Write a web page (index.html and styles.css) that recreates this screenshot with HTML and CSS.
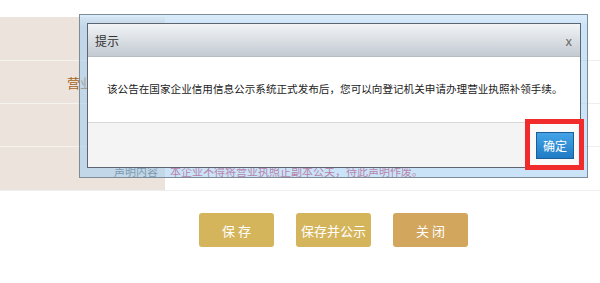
FILE: index.html
```html
<!DOCTYPE html>
<html lang="zh-CN">
<head>
  <meta charset="UTF-8">
  <meta name="viewport" content="width=device-width, initial-scale=1.0">
  <link rel="stylesheet" href="styles.css">
</head>
<body>
  <div class="page">
    <div class="form-table">
      <div class="form-row">
        <div class="form-label"></div>
        <div class="form-value"></div>
      </div>
      <div class="form-row">
        <div class="form-label label-key">营业</div>
        <div class="form-value"></div>
      </div>
      <div class="form-row">
        <div class="form-label"></div>
        <div class="form-value"></div>
      </div>
      <div class="form-row">
        <div class="form-label label-small">声明内容</div>
        <div class="form-value notice-text">本企业不得将营业执照正副本公关，待此声明作废。</div>
      </div>
    </div>

    <div class="actions">
      <button class="gold-button">保 存</button>
      <button class="gold-button">保存并公示</button>
      <button class="gold-button close-button">关 闭</button>
    </div>
  </div>

  <div class="dialog-frame">
    <div class="dialog">
      <div class="dialog-title">
        <span>提示</span>
        <span class="dialog-close">x</span>
      </div>
      <div class="dialog-body">
        该公告在国家企业信用信息公示系统正式发布后，您可以向登记机关申请办理营业执照补领手续。
      </div>
      <div class="dialog-footer">
        <button class="ok-button">确定</button>
      </div>
    </div>
  </div>

  <div class="highlight-box"></div>
</body>
</html>
```

FILE: styles.css
```css
body {
  font-family: "Noto Sans CJK SC", "Noto Sans", sans-serif;
  background-color: #fff;
  margin: 0;
  padding: 0;
  width: 600px;
  height: 283px;
  overflow: hidden;
}
.page {
  padding-top: 17px;
}
.form-table {
  border-bottom: 1px solid #eeeeee;
}
.form-row {
  display: flex;
  height: 43px;
}
.form-row:first-child {
  height: 44px;
}
.form-label {
  width: 165px;
  flex-shrink: 0;
  box-sizing: border-box;
  background-color: #ebe3dc;
  border-bottom: 1px solid #f6f2ee;
  display: flex;
  align-items: center;
  justify-content: flex-end;
  padding-right: 7px;
  font-size: 12px;
  color: #555;
}
.form-row:last-child .form-label {
  border-bottom: none;
}
/* label continues under the dialog; only its start shows */
.label-key {
  font-size: 13px;
  color: #a6651f;
  justify-content: flex-start;
  padding-left: 67px;
}
.label-small {
  font-size: 11px;
  color: #4f5a5a;
  padding-top: 4px;
}
.form-value {
  flex: 1;
  border-bottom: 1px solid #eeeeee;
  display: flex;
  align-items: center;
  padding-left: 5px;
}
.form-row:last-child .form-value {
  border-bottom: none;
}
.notice-text {
  color: #d42850;
  font-size: 11px;
  padding-top: 4px;
}
.actions {
  display: flex;
  gap: 22px;
  margin-top: 22px;
  margin-left: 199px;
}
.gold-button {
  width: 75px;
  height: 34px;
  border: none;
  border-radius: 3px;
  background-color: #d5b55c;
  color: #fff;
  font-family: inherit;
  font-size: 13px;
  padding: 0;
}
.close-button {
  background-color: #d2a65c;
}
.dialog-frame {
  position: absolute;
  left: 79px;
  top: 14px;
  width: 509px;
  height: 164px;
  box-sizing: border-box;
  border: 1px solid #7d8c99;
  background: linear-gradient(rgba(212, 232, 249, 0.85), rgba(160, 205, 242, 0.55) 12px);
  padding: 8px 6px 9px 7px;
}
.dialog {
  height: 100%;
  box-sizing: border-box;
  border: 1px solid #5d6670;
  background-color: #fff;
  display: flex;
  flex-direction: column;
}
.dialog-title {
  height: 32px;
  flex-shrink: 0;
  background: linear-gradient(#f2f4f6, #c3cad2);
  border-bottom: 1px solid #b4bcc4;
  display: flex;
  align-items: center;
  justify-content: space-between;
  padding: 0 8px 0 7px;
  font-size: 12px;
  color: #333;
}
.dialog-close {
  font-size: 13px;
  color: #6a6a6a;
}
.dialog-body {
  height: 65px;
  flex-shrink: 0;
  box-sizing: border-box;
  padding: 24px 0 0 19px;
  font-size: 10.6px;
  color: #222;
  white-space: nowrap;
}
.dialog-footer {
  flex: 1;
  background-color: #f4f4f4;
  border-top: 1px solid #d8d8d8;
  display: flex;
  align-items: center;
  justify-content: flex-end;
  padding-right: 6px;
}
.ok-button {
  position: relative;
  z-index: 2;
  width: 38px;
  height: 27px;
  border: 1px solid #1b5d96;
  background: linear-gradient(#45a3e6, #1f7cc5);
  color: #fff;
  font-family: inherit;
  font-size: 12px;
  padding: 0;
}
.highlight-box {
  position: absolute;
  z-index: 1;
  left: 525px;
  top: 119px;
  width: 59px;
  height: 51px;
  box-sizing: border-box;
  border: 5px solid #f12b2b;
  background-color: #fafafa;
}
```
